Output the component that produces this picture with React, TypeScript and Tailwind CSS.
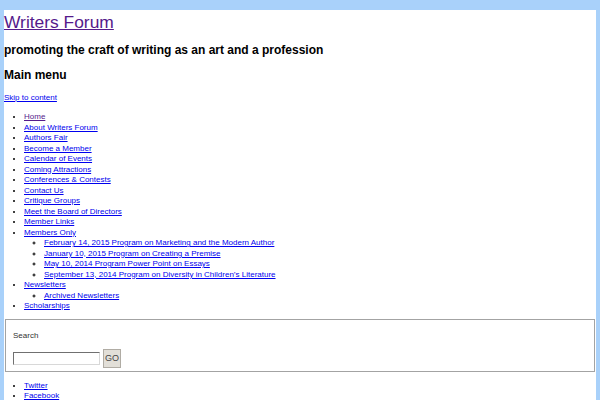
import React from "react";

const mainLinks = [
  "About Writers Forum",
  "Authors Fair",
  "Become a Member",
  "Calendar of Events",
  "Coming Attractions",
  "Conferences & Contests",
  "Contact Us",
  "Critique Groups",
  "Meet the Board of Directors",
  "Member Links",
];

const memberPrograms = [
  "February 14, 2015 Program on Marketing and the Modern Author",
  "January 10, 2015 Program on Creating a Premise",
  "May 10, 2014 Program Power Point on Essays",
  "September 13, 2014 Program on Diversity in Children\u2019s Literature",
];

function NavLink({ label, visited }: { label: string; visited?: boolean }) {
  return (
    <a href="#" className={`underline ${visited ? "text-[#551a8b]" : "text-[#0000ee]"}`}>
      {label}
    </a>
  );
}

export default function App() {
  return (
    <div className="min-h-[400px] bg-[#a9d1fa] px-[4px] pt-[10px] font-['Liberation_Sans',Arial,sans-serif] text-black">
      <div className="min-h-[390px] bg-white">
        {/* Header */}
        <h1 className="pt-[1px] text-[17.4px] leading-[22px] font-normal">
          <a href="#" className="text-[#551a8b] underline">
            Writers Forum
          </a>
        </h1>
        <h2 className="mt-[9px] text-[12px] leading-[16px] font-bold">
          promoting the craft of writing as an art and a profession
        </h2>
        <h3 className="mt-[9px] text-[12px] leading-[16px] font-bold">Main menu</h3>
        <div className="mt-[10px] text-[8px] leading-[10px]">
          <NavLink label="Skip to content" />
        </div>

        {/* Menu */}
        <ul className="mt-[9px] list-disc pl-[20px] text-[8px] leading-[10.5px]">
          <li>
            <NavLink label="Home" visited />
          </li>
          {mainLinks.map((l) => (
            <li key={l}>
              <NavLink label={l} />
            </li>
          ))}
          <li>
            <NavLink label="Members Only" />
            <ul className="list-[circle] pl-[20px]">
              {memberPrograms.map((p) => (
                <li key={p}>
                  <NavLink label={p} />
                </li>
              ))}
            </ul>
          </li>
          <li>
            <NavLink label="Newsletters" />
            <ul className="list-[circle] pl-[20px]">
              <li>
                <NavLink label="Archived Newsletters" />
              </li>
            </ul>
          </li>
          <li>
            <NavLink label="Scholarships" />
          </li>
        </ul>

        {/* Search */}
        <div className="mx-[1px] mt-[7px] h-[53px] border border-[#a3a3a3] px-[7px] pt-[11px]">
          <div className="text-[8px] leading-[10px] text-[#333]">Search</div>
          <div className="mt-[8px] flex items-center gap-[3px]">
            <input
              type="text"
              className="h-[13px] w-[87px] border border-t-[#707070] border-l-[#707070] border-r-[#d8d8d8] border-b-[#d8d8d8] bg-white"
            />
            <button className="h-[19px] w-[18px] border border-[#b0aca4] bg-[#e2dfd8] text-[9px] leading-[17px] text-[#444]">
              GO
            </button>
          </div>
        </div>

        {/* Social */}
        <ul className="mt-[9px] list-disc pl-[20px] text-[8px] leading-[10.5px]">
          <li>
            <NavLink label="Twitter" />
          </li>
          <li>
            <NavLink label="Facebook" />
          </li>
        </ul>
      </div>
    </div>
  );
}
